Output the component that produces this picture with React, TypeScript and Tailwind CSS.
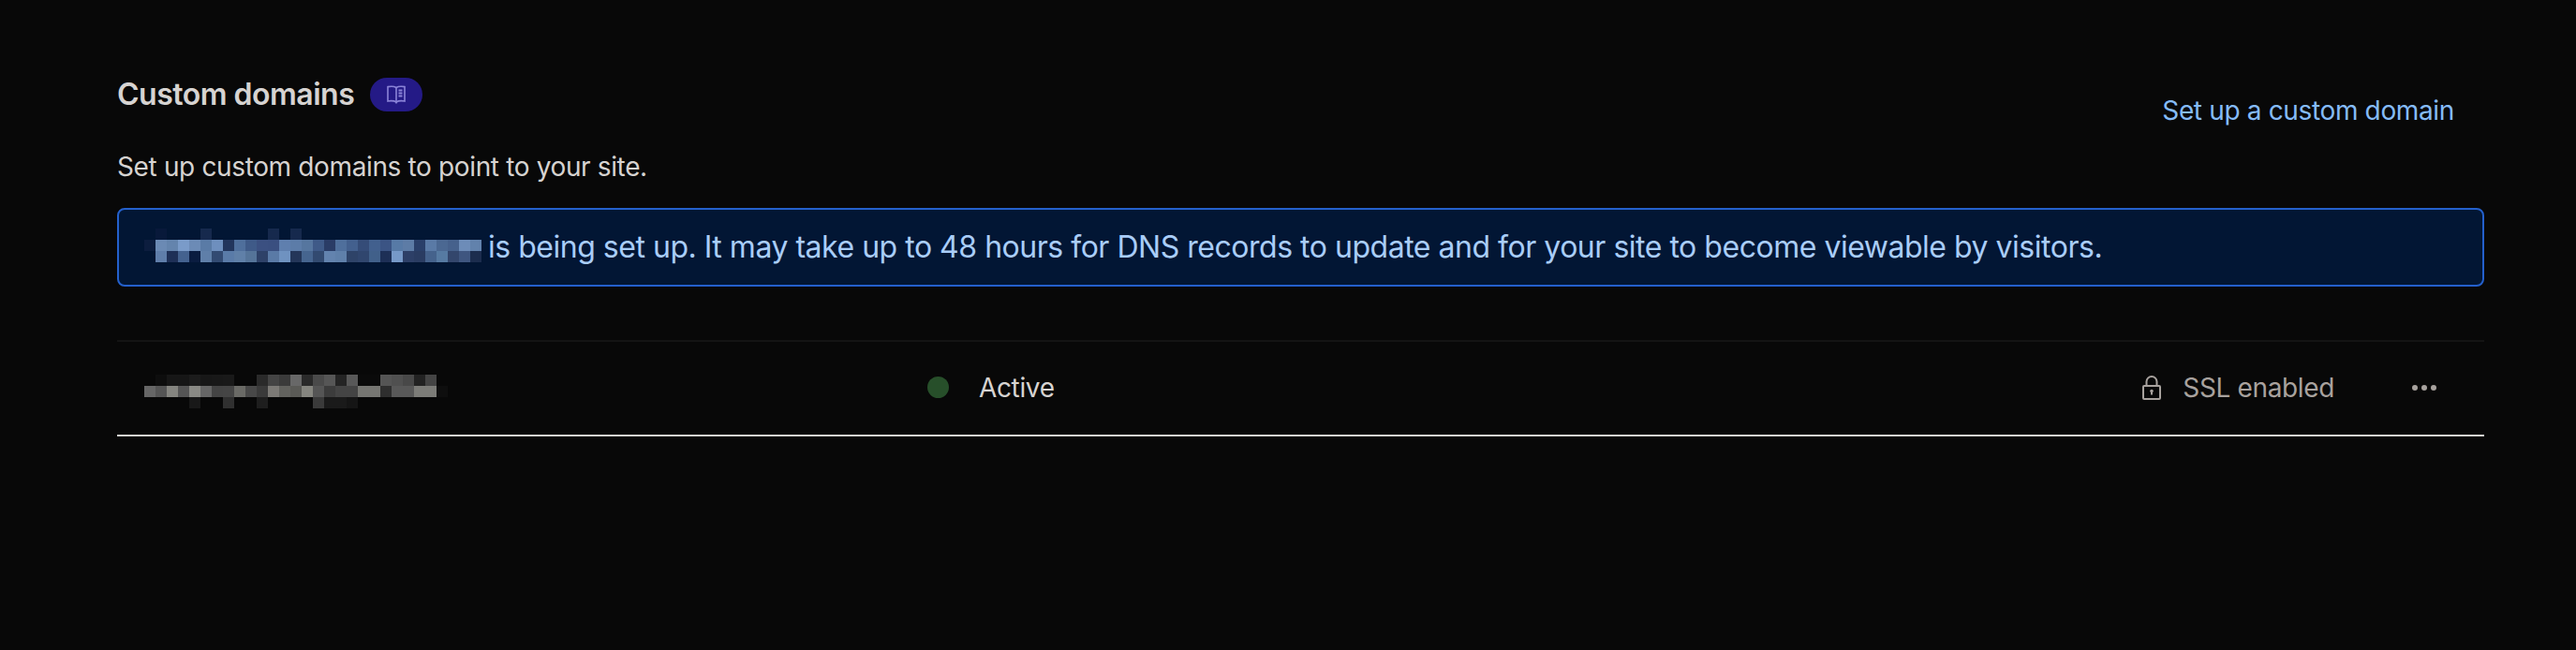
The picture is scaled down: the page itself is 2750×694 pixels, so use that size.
const noticeRows: string[][] = [
  ["#021634", "#08193a", "#021634", "#021634", "#021634", "#16294d", "#021634", "#021634", "#021634", "#021634", "#021634", "#16294d", "#021634", "#16294d", "#021634", "#021634", "#021634", "#021634", "#021634", "#021634", "#021634", "#021634", "#021634", "#021634", "#021634", "#021634", "#021634", "#021634", "#021634", "#021634"],
  ["#0c1d3e", "#6b8ab4", "#6484ad", "#7a9bc9", "#6c8bb6", "#5a7ba6", "#6e8fbe", "#22355c", "#4f6f9c", "#3f5a88", "#3b5081", "#3a4f80", "#5f7fae", "#5c7ca8", "#56769f", "#3f5a88", "#2a3c66", "#4f6f9c", "#43608e", "#354c78", "#42608e", "#3b5484", "#577aa6", "#5d7ca6", "#2a3f69", "#5a7aa6", "#4b6892", "#46618c", "#6d8cb8", "#6282ac"],
  ["#021634", "#5f7eaa", "#1e3057", "#44628f", "#0a1c40", "#5f7fa9", "#324a72", "#5a7ba8", "#6080a8", "#557499", "#2e4168", "#5a7aa6", "#6f92c0", "#243659", "#46658f", "#324a70", "#6383ae", "#5f80aa", "#2e4368", "#30466e", "#41608a", "#1d2f56", "#7699c8", "#2d3f67", "#2a3c62", "#45628c", "#567aa2", "#33466c", "#3f5680", "#1c2d4e"],
]

const domainRows: string[][] = [
  ["#080808", "#0d0d0d", "#161616", "#161616", "#1c1c1c", "#171717", "#181818", "#191919", "#080808", "#080808", "#2a2a2a", "#444444", "#3a3a3a", "#686868", "#2a2a2a", "#4a4a4a", "#565656", "#242424", "#585858", "#0a0a0a", "#0a0a0a", "#555555", "#505050", "#484848", "#222222", "#444444", "#080808"],
  ["#666666", "#555555", "#858580", "#555555", "#8a8a85", "#666666", "#444444", "#454545", "#6a6a66", "#484848", "#3a3a3a", "#7c7a76", "#62625e", "#5a5a56", "#85857f", "#555555", "#3c3c3c", "#444444", "#444444", "#767672", "#767672", "#2e2e2e", "#585858", "#585858", "#7c7c78", "#7c7c78", "#0e0e0e"],
  ["#080808", "#080808", "#080808", "#080808", "#181818", "#080808", "#080808", "#303030", "#080808", "#080808", "#1e1e1e", "#080808", "#080808", "#080808", "#080808", "#3a3a3a", "#1a1a1a", "#1a1a1a", "#151515", "#080808", "#080808", "#080808", "#080808", "#080808", "#080808", "#080808", "#080808"],
]

function BookIcon() {
  return (
    <svg width="20" height="20" viewBox="0 0 20 20" fill="none" stroke="#8b84d8" strokeWidth="1.6">
      <path d="M10 2.5C8 1.2 4 1 1 1.6V17c3-.5 7-.3 9 1 2-1.3 6-1.5 9-1V1.6C16 1 12 1.2 10 2.5Z" />
      <path d="M10 2.5V19.5" />
      <path d="M12.5 5.5h4M12.5 8.5h4M12.5 11.5h4" strokeWidth="1.8" />
    </svg>
  )
}

function LockIcon() {
  return (
    <svg width="20" height="26" viewBox="0 0 20 26" fill="none" stroke="#a8a29e" strokeWidth="2">
      <rect x="1" y="11" width="18" height="14" rx="1" />
      <path d="M4.5 11V6.5a5.5 5.5 0 0 1 11 0V11" />
      <circle cx="10" cy="16.5" r="1.8" fill="#a8a29e" stroke="none" />
      <path d="M10 17v3.5" />
    </svg>
  )
}

export default function App() {
  return (
    <div className="min-h-[694px] w-full bg-[#080808] pt-[80px] pr-[98px] pl-[125px] font-['Inter',sans-serif]">
      <div className="flex items-start justify-between">
        <div className="flex items-center gap-[17px]">
          <h2 className="text-[32px] leading-[42px] font-semibold tracking-[-0.5px] text-[#d6d3d1]">Custom domains</h2>
          <span className="flex h-9 w-14 items-center justify-center rounded-full bg-[#241a86]">
            <BookIcon />
          </span>
        </div>
        <a className="mt-[18px] pr-[32px] text-[28px] leading-[40px] tracking-[-0.35px] text-[#85bbf7]">Set up a custom domain</a>
      </div>

      <p className="mt-[20px] text-[28px] leading-[40px] tracking-[-0.36px] text-[#d6d3d1]">Set up custom domains to point to your site.</p>

      <div className="mt-[24px] flex h-[84px] items-center rounded-lg border-2 border-[#2460cc] bg-[#021634] pl-[27px]">
        <span className="mr-[7px] mb-[4px] flex flex-col">
          {noticeRows.map((row, i) => (
            <span key={i} className="flex">
              {row.map((color, j) => (
                <span key={j} className="h-3 w-3" style={{ backgroundColor: color }} />
              ))}
            </span>
          ))}
        </span>
        <span className="text-[32px] leading-[48px] tracking-[-0.48px] text-[#a9cdf8]">
          is being set up. It may take up to 48 hours for DNS records to update and for your site to become viewable by visitors.
        </span>
      </div>

      <div className="mt-[57px] flex h-[103px] items-center border-t-2 border-b-2 border-t-[#141414] border-b-[#d6d3d1]">
        <div className="mt-[6px] w-[865px] pl-[29px]">
          {domainRows.map((row, i) => (
            <div key={i} className="flex">
              {row.map((color, j) => (
                <span key={j} className="h-3 w-3" style={{ backgroundColor: color }} />
              ))}
            </div>
          ))}
        </div>
        <div className="mb-[2px] flex items-center gap-[32px]">
          <span className="h-[23px] w-[23px] rounded-full bg-[#274f2a]" />
          <span className="text-[28px] leading-[40px] tracking-[-0.36px] text-[#d6d3d1]">Active</span>
        </div>
        <div className="mb-[2px] ml-auto flex items-center">
          <LockIcon />
          <span className="ml-[23px] text-[28px] leading-[40px] tracking-[-0.36px] text-[#a8a29e]">SSL enabled</span>
          <span className="mr-[51px] ml-[83px] flex gap-1">
            <span className="h-[6px] w-[6px] rounded-full bg-[#a8a29e]" />
            <span className="h-[6px] w-[6px] rounded-full bg-[#a8a29e]" />
            <span className="h-[6px] w-[6px] rounded-full bg-[#a8a29e]" />
          </span>
        </div>
      </div>
    </div>
  )
}
